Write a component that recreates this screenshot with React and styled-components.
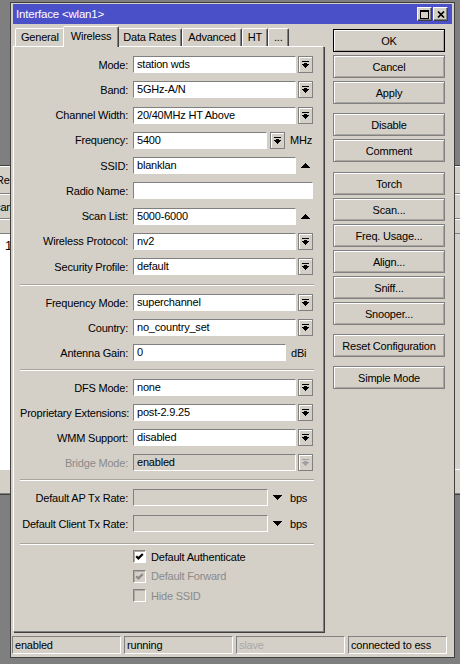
import { createGlobalStyle, styled } from "styled-components";

const FACE = "#d4d0c8";
const SHADE = "#808080";
const DARK = "#404040";
const GREY_TEXT = "#8a8a8a";

const GlobalStyle = createGlobalStyle`
  html, body {
    margin: 0;
    padding: 0;
    background: #808080;
  }
  body {
    font-family: "Liberation Sans", Arial, sans-serif;
    font-size: 11px;
    letter-spacing: -0.2px;
    color: #000;
  }
  * {
    box-sizing: border-box;
  }
`;

function DropGlyph({ color = "#000" }) {
  return (
    <svg width="7" height="7" viewBox="0 0 7 7" fill={color} shapeRendering="crispEdges">
      <rect x="0" y="0" width="7" height="1" />
      <rect x="2" y="2" width="3" height="1" />
      <path d="M0 3H7V4H6V5H5V6H4V7H3V6H2V5H1V4H0Z" />
    </svg>
  );
}

function UpTriangle() {
  return (
    <svg width="9" height="5" viewBox="0 0 9 5" fill="#000" shapeRendering="crispEdges">
      <path d="M4 0H5V1H6V2H7V3H8V4H9V5H0V4H1V3H2V2H3V1H4Z" />
    </svg>
  );
}

function DownTriangle() {
  return (
    <svg width="9" height="5" viewBox="0 0 9 5" fill="#000" shapeRendering="crispEdges">
      <path d="M0 0H9V1H8V2H7V3H6V4H5V5H4V4H3V3H2V2H1V1H0Z" />
    </svg>
  );
}

function CheckGlyph({ color }) {
  return (
    <svg width="11" height="11" viewBox="0 0 11 11">
      <path d="M2.2 5.2 L4.4 7.4 L8.8 3" fill="none" stroke={color} strokeWidth="2.2" />
    </svg>
  );
}

const Desktop = styled.div`
  position: relative;
  width: 460px;
  height: 664px;
  overflow: hidden;
  background: #7f7f7f;
`;

/* window of another program, lying behind the dialog */
const BackWindow = styled.div`
  position: absolute;
  left: -40px;
  top: 165px;
  width: 540px;
  height: 330px;
  background: ${FACE};
  border: 1px solid ${DARK};
  display: flex;
  flex-direction: column;
`;

const BackBar = styled.div`
  flex: none;
  height: ${(p) => p.$h}px;
  padding-left: ${(p) => p.$pad || 0}px;
  border-top: 1px solid #fff;
  border-bottom: 1px solid ${SHADE};
  display: flex;
  align-items: center;
`;

const BackList = styled.div`
  flex: 1;
  display: flex;
`;

const BackListLeft = styled.div`
  flex: 0 0 240px;
  background: #fff;
  border-left: 1px solid ${DARK};
  padding: 4px 0 0 43px;
  font-size: 13px;
`;

const BackListRight = styled.div`
  flex: 1;
  background: ${FACE};
`;

const Dialog = styled.div`
  position: absolute;
  left: 10px;
  top: 2px;
  width: 445px;
  height: 656px;
  background: ${FACE};
  border: 1px solid ${DARK};
  padding: 1px 2px 3px 2px;
  display: flex;
  flex-direction: column;
`;

const TitleBar = styled.div`
  flex: none;
  height: 20px;
  background: #4a50c8;
  color: #fff;
  display: flex;
  align-items: center;
  justify-content: space-between;
  padding: 0 4px 0 3px;
  font-size: 11.5px;
`;

const TitleButtons = styled.div`
  display: flex;
  gap: 1px;
`;

const TitleButton = styled.div`
  width: 15px;
  height: 14px;
  background: ${FACE};
  border: 1px solid;
  border-color: #fff ${DARK} ${DARK} #fff;
  box-shadow: inset -1px -1px 0 ${SHADE};
  display: grid;
  place-items: center;
`;

const Body = styled.div`
  flex: 1;
  display: grid;
  grid-template-columns: 311px 112px;
  column-gap: 9px;
  min-height: 0;
`;

const LeftCol = styled.div`
  display: flex;
  flex-direction: column;
`;

const TabStrip = styled.div`
  flex: none;
  height: 22px;
  display: flex;
  align-items: flex-end;
  padding-left: 2px;
  position: relative;
  z-index: 2;
`;

const Tab = styled.div`
  position: relative;
  z-index: ${(p) => (p.$active ? 2 : 1)};
  height: ${(p) => (p.$active ? 21 : 18)}px;
  margin: ${(p) => (p.$active ? "0 -2px -1px" : "0")};
  padding: 0 ${(p) => (p.$active ? 7 : 5)}px ${(p) => (p.$active ? 3 : 1)}px;
  background: ${FACE};
  border: 1px solid;
  border-bottom: none;
  border-color: #fff ${DARK} transparent #fff;
  border-radius: 2px 2px 0 0;
  box-shadow: inset -1px 0 0 ${SHADE};
  display: flex;
  align-items: center;
  white-space: nowrap;
`;

const Panel = styled.div`
  flex: 1;
  position: relative;
  z-index: 1;
  border: 1px solid;
  border-color: #fff ${SHADE} ${SHADE} #fff;
  box-shadow: 1px 1px 0 ${DARK};
  padding: 9px 9px 0 6px;
  display: flex;
  flex-direction: column;
`;

const Group = styled.div`
  display: flex;
  flex-direction: column;
  gap: ${(p) => p.$gap}px;
`;

const Separator = styled.div`
  flex: none;
  height: 2px;
  border-top: 1px solid #a9a59c;
  border-bottom: 1px solid #fff;
  margin: ${(p) => p.$top}px 0 ${(p) => p.$bottom}px;
`;

const Row = styled.div`
  height: 17px;
  display: flex;
  align-items: center;
  gap: 5px;
`;

const Label = styled.div`
  flex: none;
  width: 108px;
  text-align: right;
  white-space: nowrap;
  color: ${(p) => (p.$off ? GREY_TEXT : "#000")};
`;

const Control = styled.div`
  display: flex;
  align-items: center;
  gap: ${(p) => p.$gap}px;
`;

const Field = styled.div`
  flex: none;
  width: ${(p) => p.$w}px;
  height: 17px;
  background: ${(p) => (p.$off ? FACE : "#fff")};
  border: 1px solid;
  border-color: ${SHADE} #fff #fff ${SHADE};
  padding: 0 3px;
  line-height: 15px;
  white-space: nowrap;
  overflow: hidden;
`;

const DropButton = styled.div`
  flex: none;
  width: 15px;
  height: 17px;
  background: ${FACE};
  border: 1px solid ${SHADE};
  box-shadow: inset 1px 1px 0 #fff;
  display: grid;
  place-items: center;
`;

const ArrowSlot = styled.div`
  flex: none;
  width: 15px;
  height: 17px;
  display: grid;
  place-items: center;
`;

const Unit = styled.span`
  margin-left: ${(p) => p.$ml || 0}px;
`;

const CheckGroup = styled.div`
  display: flex;
  flex-direction: column;
  gap: 6.5px;
  padding-left: 113px;
`;

const CheckRow = styled.div`
  height: 13px;
  display: flex;
  align-items: center;
  gap: 5px;
  color: ${(p) => (p.$off ? GREY_TEXT : "#000")};
`;

const CheckBox = styled.div`
  flex: none;
  width: 13px;
  height: 13px;
  background: ${(p) => (p.$off ? FACE : "#fff")};
  border: 1px solid;
  border-color: ${SHADE} #fff #fff ${SHADE};
  box-shadow: inset 1px 1px 0 #b0aca4;
  display: grid;
  place-items: center;
`;

const ButtonCol = styled.div`
  display: flex;
  flex-direction: column;
  gap: 3px;
  padding-top: 5px;
`;

const Button = styled.button`
  flex: none;
  height: 23px;
  margin: ${(p) => p.$space || 0}px 0 0;
  padding: 0;
  background: ${FACE};
  border: 1px solid ${(p) => (p.$default ? "#000" : SHADE)};
  box-shadow: inset 1px 1px 0 #fff, inset -1px -1px 0 #aaa69e;
  font-family: inherit;
  font-size: 11px;
  letter-spacing: inherit;
  color: #000;
  text-align: center;
`;

const StatusBar = styled.div`
  flex: none;
  height: 18px;
  margin: 4px 0 0 -1px;
  display: grid;
  grid-template-columns: 109px 109px 109px 99px;
  gap: 3px;
`;

const StatusCell = styled.div`
  border: 1px solid;
  border-color: ${SHADE} #fff #fff ${SHADE};
  padding-left: 2px;
  line-height: 16px;
  white-space: nowrap;
  color: ${(p) => (p.$off ? "#a8a8a8" : "#000")};
`;

function FormRow({ label, off, gap = 2, children }) {
  return (
    <Row>
      <Label $off={off}>{label}</Label>
      <Control $gap={gap}>{children}</Control>
    </Row>
  );
}

function Combo({ label, value, off }) {
  return (
    <FormRow label={label} off={off}>
      <Field $w={163} $off={off}>{value}</Field>
      <DropButton>
        <DropGlyph color={off ? "#a0a0a0" : "#000"} />
      </DropButton>
    </FormRow>
  );
}

const tabs = ["General", "Wireless", "Data Rates", "Advanced", "HT", "..."];

const buttons = [
  { text: "OK", isDefault: true },
  { text: "Cancel" },
  { text: "Apply" },
  { text: "Disable", space: 6 },
  { text: "Comment" },
  { text: "Torch", space: 7 },
  { text: "Scan..." },
  { text: "Freq. Usage..." },
  { text: "Align..." },
  { text: "Sniff..." },
  { text: "Snooper..." },
  { text: "Reset Configuration", space: 6 },
  { text: "Simple Mode", space: 6 },
];

export default function App() {
  return (
    <>
      <GlobalStyle />
      <Desktop>
        <BackWindow>
          <BackBar $h={28} $pad={35}>Re</BackBar>
          <BackBar $h={25} $pad={27}>Scan</BackBar>
          <BackBar $h={15} />
          <BackList>
            <BackListLeft>1</BackListLeft>
            <BackListRight />
          </BackList>
          <BackBar $h={25} />
        </BackWindow>

        <Dialog>
          <TitleBar>
            <span>Interface &lt;wlan1&gt;</span>
            <TitleButtons>
              <TitleButton>
                <svg width="9" height="9" viewBox="0 0 9 9" shapeRendering="crispEdges">
                  <rect x="0.5" y="0.5" width="8" height="8" fill="none" stroke="#000" />
                  <rect x="0" y="0" width="9" height="2" fill="#000" />
                </svg>
              </TitleButton>
              <TitleButton>
                <svg width="8" height="7" viewBox="0 0 8 7">
                  <path d="M1 0.5 L7 6.5 M7 0.5 L1 6.5" stroke="#000" strokeWidth="1.7" />
                </svg>
              </TitleButton>
            </TitleButtons>
          </TitleBar>

          <Body>
            <LeftCol>
              <TabStrip>
                {tabs.map((t) => (
                  <Tab key={t} $active={t === "Wireless"}>
                    {t}
                  </Tab>
                ))}
              </TabStrip>
              <Panel>
                <Group $gap={8.25}>
                  <Combo label="Mode:" value="station wds" />
                  <Combo label="Band:" value="5GHz-A/N" />
                  <Combo label="Channel Width:" value="20/40MHz HT Above" />
                  <FormRow label="Frequency:" gap={3}>
                    <Field $w={134}>5400</Field>
                    <DropButton>
                      <DropGlyph />
                    </DropButton>
                    <Unit $ml={2}>MHz</Unit>
                  </FormRow>
                  <FormRow label="SSID:">
                    <Field $w={163}>blanklan</Field>
                    <ArrowSlot>
                      <UpTriangle />
                    </ArrowSlot>
                  </FormRow>
                  <FormRow label="Radio Name:">
                    <Field $w={180} />
                  </FormRow>
                  <FormRow label="Scan List:">
                    <Field $w={163}>5000-6000</Field>
                    <ArrowSlot>
                      <UpTriangle />
                    </ArrowSlot>
                  </FormRow>
                  <Combo label="Wireless Protocol:" value="nv2" />
                  <Combo label="Security Profile:" value="default" />
                </Group>

                <Separator $top={9} $bottom={8} />

                <Group $gap={8}>
                  <Combo label="Frequency Mode:" value="superchannel" />
                  <Combo label="Country:" value="no_country_set" />
                  <FormRow label="Antenna Gain:">
                    <Field $w={153}>0</Field>
                    <Unit $ml={3}>dBi</Unit>
                  </FormRow>
                </Group>

                <Separator $top={8} $bottom={8} />

                <Group $gap={8}>
                  <Combo label="DFS Mode:" value="none" />
                  <Combo label="Proprietary Extensions:" value="post-2.9.25" />
                  <Combo label="WMM Support:" value="disabled" />
                  <Combo label="Bridge Mode:" value="enabled" off />
                </Group>

                <Separator $top={8} $bottom={8} />

                <Group $gap={9}>
                  <FormRow label="Default AP Tx Rate:">
                    <Field $w={135} $off />
                    <ArrowSlot>
                      <DownTriangle />
                    </ArrowSlot>
                    <Unit $ml={3}>bps</Unit>
                  </FormRow>
                  <FormRow label="Default Client Tx Rate:">
                    <Field $w={135} $off />
                    <ArrowSlot>
                      <DownTriangle />
                    </ArrowSlot>
                    <Unit $ml={3}>bps</Unit>
                  </FormRow>
                </Group>

                <Separator $top={11} $bottom={5} />

                <CheckGroup>
                  <CheckRow>
                    <CheckBox>
                      <CheckGlyph color="#000" />
                    </CheckBox>
                    Default Authenticate
                  </CheckRow>
                  <CheckRow $off>
                    <CheckBox $off>
                      <CheckGlyph color="#8a8a8a" />
                    </CheckBox>
                    Default Forward
                  </CheckRow>
                  <CheckRow $off>
                    <CheckBox $off />
                    Hide SSID
                  </CheckRow>
                </CheckGroup>
              </Panel>
            </LeftCol>

            <ButtonCol>
              {buttons.map((b) => (
                <Button key={b.text} $default={b.isDefault} $space={b.space}>
                  {b.text}
                </Button>
              ))}
            </ButtonCol>
          </Body>

          <StatusBar>
            <StatusCell>enabled</StatusCell>
            <StatusCell>running</StatusCell>
            <StatusCell $off>slave</StatusCell>
            <StatusCell>connected to ess</StatusCell>
          </StatusBar>
        </Dialog>
      </Desktop>
    </>
  );
}
